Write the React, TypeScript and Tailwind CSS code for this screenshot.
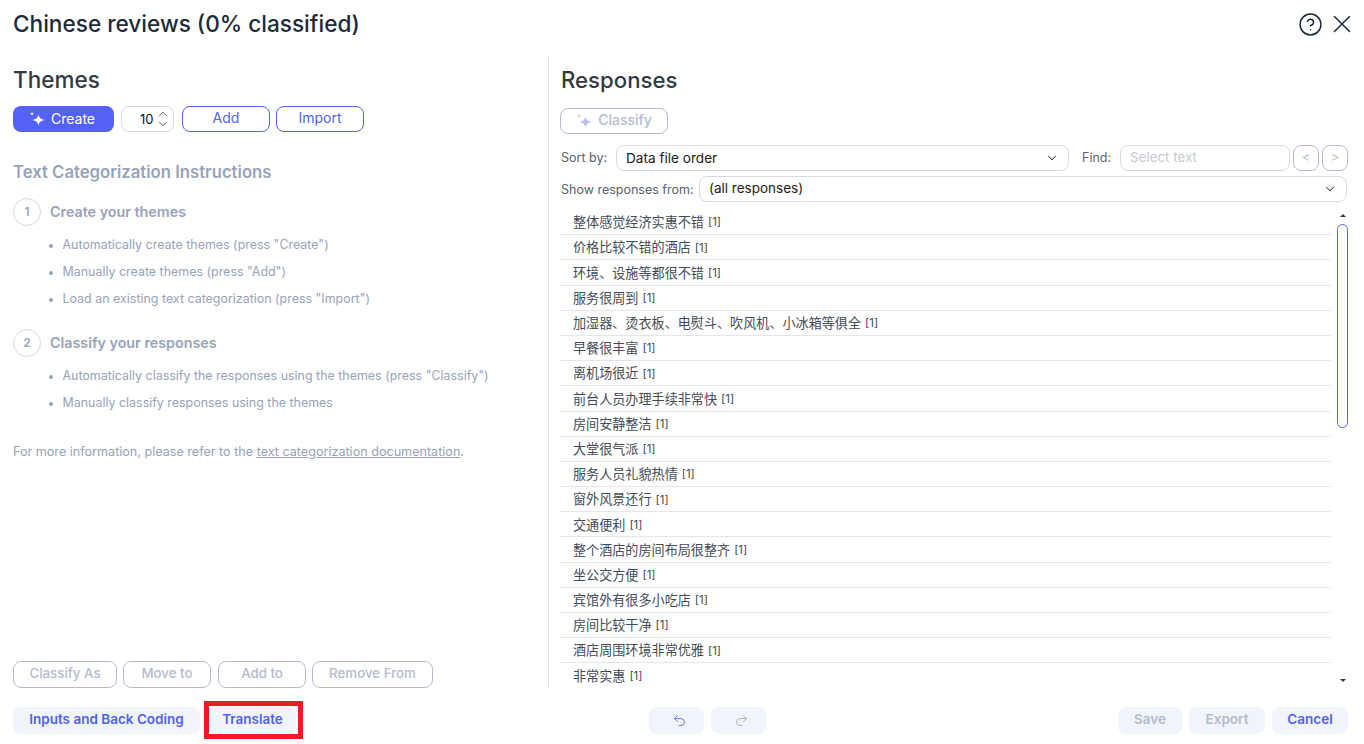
import React from 'react';
import { ChevronDown, ChevronUp, CircleHelp, Redo2, Undo2, X } from 'lucide-react';

const responses = [
    '整体感觉经济实惠不错',
    '价格比较不错的酒店',
    '环境、设施等都很不错',
    '服务很周到',
    '加湿器、烫衣板、电熨斗、吹风机、小冰箱等俱全',
    '早餐很丰富',
    '离机场很近',
    '前台人员办理手续非常快',
    '房间安静整洁',
    '大堂很气派',
    '服务人员礼貌热情',
    '窗外风景还行',
    '交通便利',
    '整个酒店的房间布局很整齐',
    '坐公交方便',
    '宾馆外有很多小吃店',
    '房间比较干净',
    '酒店周围环境非常优雅',
    '非常实惠',
];

const Sparkle = ({ className }: { className: string }) => (
    <svg viewBox="0 0 16 16" className={className} fill="currentColor">
        <path d="M9.5 3 C10 6.5 11 7.8 15.5 9 C11 10.2 10 11.5 9.5 15 C9 11.5 8 10.2 3.5 9 C8 7.8 9 6.5 9.5 3 Z" />
        <path d="M3 0.5 C3.2 2 3.8 2.6 5.2 2.8 C3.8 3 3.2 3.6 3 5 C2.8 3.6 2.2 3 0.8 2.8 C2.2 2.6 2.8 2 3 0.5 Z" />
    </svg>
);

const OutlineButton = ({ label, className }: { label: string; className: string }) => (
    <button className={`h-[26px] rounded-lg border border-[#5361f5] pb-[3px] text-[14px] text-[#5361f5] ${className}`}>
        {label}
    </button>
);

const DisabledButton = ({ label, className }: { label: string; className: string }) => (
    <button className={`h-[27px] rounded-lg border border-[#b4bccd] pb-[1px] text-[13.3px] font-medium text-[#b4bccd] ${className}`}>
        {label}
    </button>
);

const FooterButton = ({ label, className }: { label: string; className: string }) => (
    <button className={`h-[27px] rounded-lg bg-[#f1f4fa] pb-[2px] text-[13.5px] font-semibold ${className}`}>{label}</button>
);

const Step = ({ n, title, items, className }: { n: number; title: string; items: string[]; className: string }) => (
    <div className={className}>
        <div className="flex items-center gap-[9px]">
            <div className="flex h-[28px] w-[28px] items-center justify-center rounded-full border border-[#d5d9e4] text-[12px] font-semibold text-[#98a3bb]">
                {n}
            </div>
            <span className="pb-[1px] text-[14.3px] font-semibold text-[#98a3bb]">{title}</span>
        </div>
        <ul className="mt-[6px] ml-[49.5px] text-[12.45px] text-[#98a3bb]">
            {items.map((item) => (
                <li key={item} className="relative flex h-[27px] items-center">
                    <span className="absolute left-[-14px] h-[4px] w-[4px] rounded-full bg-[#98a3bb]" />
                    {item}
                </li>
            ))}
        </ul>
    </div>
);

const Themes = () => (
    <section className="flex w-[549px] flex-col border-r border-[#e4e6eb] pl-[13px]">
        <h2 className="mt-[10px] text-[22.5px] leading-[30px] font-medium text-[#333a44]">Themes</h2>
        <div className="mt-[11px] flex items-center">
            <button className="flex h-[26px] w-[101px] items-center justify-center gap-[6px] rounded-lg bg-[#5361f5] pr-[3px] pb-[1px] text-[14px] text-white">
                <Sparkle className="h-[16px] w-[16px]" />
                Create
            </button>
            <div className="ml-[7px] flex h-[26px] w-[53px] items-center justify-end rounded-lg border border-[#d5d9e4] pr-[3.5px] text-[13px] text-[#111]">
                <span className="mt-[2px]">10</span>
                <span className="ml-[2px] flex flex-col text-[#444]">
                    <ChevronUp size={14} strokeWidth={1.5} className="-mb-[2px]" />
                    <ChevronDown size={14} strokeWidth={1.5} className="-mt-[2px]" />
                </span>
            </div>
            <OutlineButton label="Add" className="ml-[8px] w-[88px]" />
            <OutlineButton label="Import" className="ml-[6px] w-[88px]" />
        </div>
        <h3 className="mt-[27px] text-[16.7px] leading-[26px] font-semibold text-[#98a3bb]">Text Categorization Instructions</h3>
        <Step
            n={1}
            title="Create your themes"
            className="mt-[13px]"
            items={[
                'Automatically create themes (press "Create")',
                'Manually create themes (press "Add")',
                'Load an existing text categorization (press "Import")',
            ]}
        />
        <Step
            n={2}
            title="Classify your responses"
            className="mt-[16px]"
            items={['Automatically classify the responses using the themes (press "Classify")', 'Manually classify responses using the themes']}
        />
        <p className="mt-[26px] text-[12.6px] leading-[18px] text-[#98a3bb]">
            For more information, please refer to the <span className="underline">text categorization documentation</span>.
        </p>
        <div className="mt-auto flex">
            <DisabledButton label="Classify As" className="w-[104px]" />
            <DisabledButton label="Move to" className="ml-[6px] w-[88px]" />
            <DisabledButton label="Add to" className="ml-[7px] w-[88px]" />
            <DisabledButton label="Remove From" className="ml-[6px] w-[121px]" />
        </div>
    </section>
);

const ResponseList = () => (
    <div className="relative mt-[8px] flex-1 overflow-hidden">
        <ul className="mr-[17px]">
            {responses.map((r) => (
                <li key={r} className="flex h-[25.2px] items-center border-b border-[#e4e6eb] pt-[2px] pl-[13px] text-[13.1px] text-[#444b55]">
                    {r}
                    <span className="ml-[4px] text-[11.5px]">[1]</span>
                </li>
            ))}
        </ul>
        <span className="absolute top-[4px] right-[2px] h-0 w-0 border-x-[3px] border-b-[3px] border-x-transparent border-b-[#333a44]" />
        <div className="absolute top-[14px] right-0 h-[204px] w-[11px] rounded-full border border-[#5361f5]" />
        <span className="absolute right-[2px] bottom-[6px] h-0 w-0 border-x-[3px] border-t-[3px] border-x-transparent border-t-[#333a44]" />
    </div>
);

const Responses = () => (
    <section className="flex flex-1 flex-col pr-[16px] pl-[11px]">
        <h2 className="mt-[10px] ml-[1px] text-[22.2px] leading-[30px] font-medium text-[#333a44]">Responses</h2>
        <button className="mt-[13px] flex h-[26px] w-[108px] items-center justify-center gap-[6px] rounded-lg border border-[#b4bccd] pb-[3px] text-[14px] font-medium text-[#b4bccd]">
            <Sparkle className="mt-[2px] h-[16px] w-[16px] text-[#b9c2ef]" />
            Classify
        </button>
        <div className="mt-[11px] flex h-[26px] items-center text-[12.5px] text-[#5b6270]">
            <span className="ml-[1px] w-[55px]">Sort by:</span>
            <div className="flex h-[26px] w-[453px] items-center justify-between rounded-lg border border-[#d5d9e4] pr-[9px] pl-[9px] text-[13.6px] text-[#222]">
                Data file order
                <ChevronDown size={14} strokeWidth={1.75} className="text-[#333a44]" />
            </div>
            <span className="ml-[13px] w-[38px]">Find:</span>
            <div className="flex h-[26px] w-[170px] items-center rounded-lg border border-[#d5d9e4] pb-[1px] pl-[9px] text-[13.4px] text-[#c6c9d0]">
                Select text
            </div>
            <button className="ml-[3px] h-[26px] w-[26px] rounded-lg border border-[#b4bccd] text-[13px] text-[#b4bccd]">&lt;</button>
            <button className="ml-[3px] h-[26px] w-[26px] rounded-lg border border-[#b4bccd] text-[13px] text-[#b4bccd]">&gt;</button>
        </div>
        <div className="mt-[5px] flex h-[26px] items-center text-[12.5px] text-[#5b6270]">
            <span className="mt-[2px] ml-[1px] w-[138px]">Show responses from:</span>
            <div className="flex h-[26px] w-[648px] items-center justify-between rounded-lg border border-[#d5d9e4] pr-[9px] pl-[9px] text-[13.5px] text-[#222]">
                <span className="-mt-[2px]">(all responses)</span>
                <ChevronDown size={14} strokeWidth={1.75} className="text-[#333a44]" />
            </div>
        </div>
        <ResponseList />
    </section>
);

export default function App() {
    return (
        <div className="flex h-[744px] w-[1364px] flex-col overflow-hidden bg-white font-['Inter','Noto_Sans_CJK_SC',sans-serif]">
            <header className="flex h-[55px] shrink-0 items-start justify-between pt-[8px] pr-[7px] pl-[13px]">
                <h1 className="text-[22.6px] leading-[32px] font-medium text-[#1e2a3b]">Chinese reviews (0% classified)</h1>
                <div className="flex items-center gap-[4.5px] pt-[1px] text-[#1e2a3b]">
                    <CircleHelp size={25} strokeWidth={1.4} />
                    <X size={30} strokeWidth={1.2} />
                </div>
            </header>
            <main className="flex h-[633px] shrink-0">
                <Themes />
                <Responses />
            </main>
            <footer className="relative mt-[19px] flex pr-[16px] pl-[13px]">
                <FooterButton label="Inputs and Back Coding" className="w-[187px] text-[#5361f5]" />
                <div className="-mt-[1px] ml-[9px] h-[28px] w-[89px] outline-[5px] outline-[#ed1c24]">
                    <FooterButton label="Translate" className="mt-[1px] w-[87px] text-[#5361f5]" />
                </div>
                <button className="ml-[351px] flex h-[27px] w-[55px] items-center justify-center rounded-lg bg-[#f1f4fa] pl-[6px] text-[#5361f5]">
                    <Undo2 size={15} strokeWidth={1.3} />
                </button>
                <button className="ml-[7px] flex h-[27px] w-[55px] items-center justify-center rounded-lg bg-[#f1f4fa] pl-[5px] text-[#98a3bb]">
                    <Redo2 size={15} strokeWidth={1.3} />
                </button>
                <FooterButton label="Save" className="ml-auto w-[64px] text-[#b4bccd]" />
                <FooterButton label="Export" className="ml-[7px] w-[76px] text-[#b4bccd]" />
                <FooterButton label="Cancel" className="ml-[7px] w-[76px] text-[#5361f5]" />
            </footer>
        </div>
    );
}
